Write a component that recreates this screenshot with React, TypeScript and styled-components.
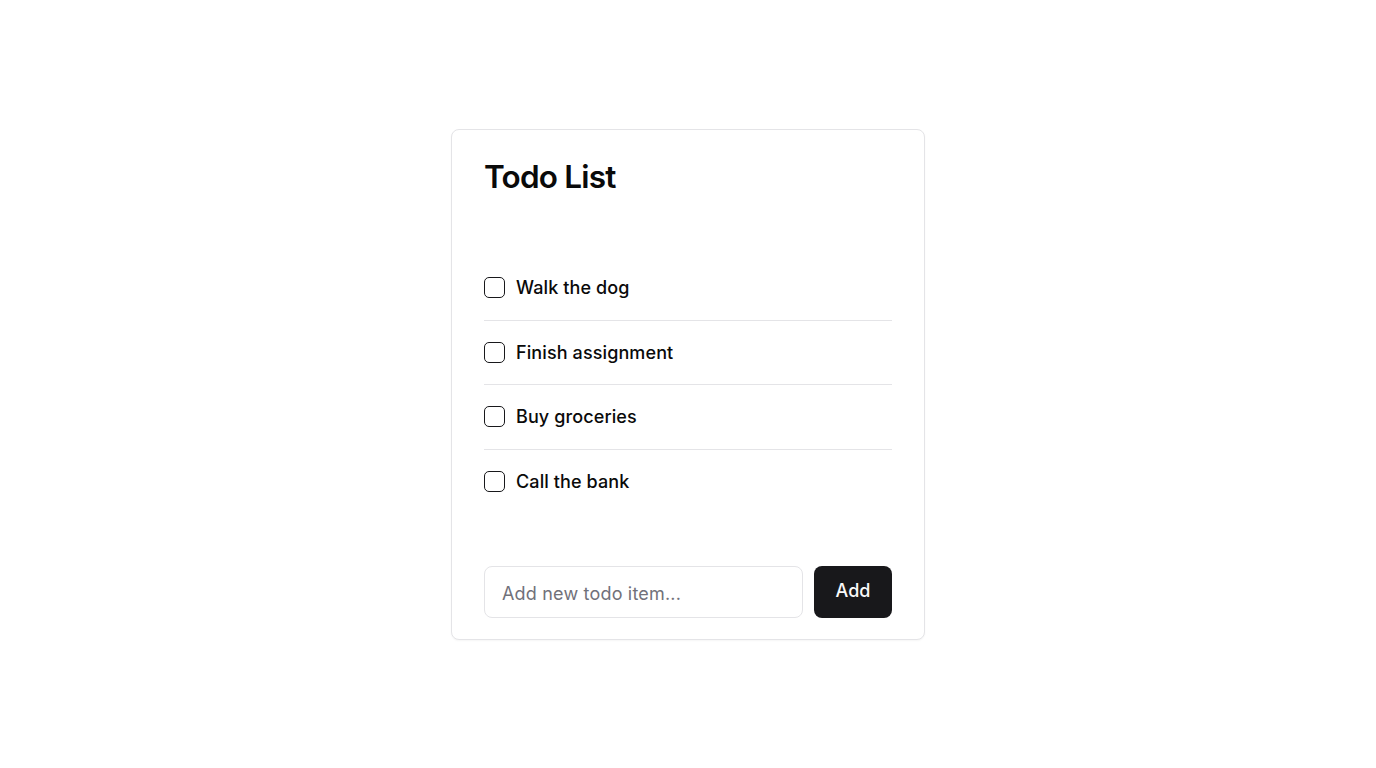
import React, { useState } from "react";
import styled, { createGlobalStyle } from "styled-components";

const Global = createGlobalStyle`
  * { box-sizing: border-box; }
  html, body { margin: 0; padding: 0; background: #ffffff; }
  body { font-family: Inter, "Noto Sans", sans-serif; color: #0a0a0a; }
`;

const Page = styled.div`
  min-height: 768px;
  display: flex;
  justify-content: center;
  padding-top: 129px;
`;

const Card = styled.div`
  width: 474px;
  height: 511px;
  border: 1px solid #e4e4e7;
  border-radius: 8px;
  background: #fff;
  box-shadow: 0 1px 2px rgba(0, 0, 0, 0.04);
  padding: 32px 32px 21px;
  display: flex;
  flex-direction: column;
`;

const Title = styled.h2`
  margin: 0;
  font-size: 31.5px;
  line-height: 30px;
  font-weight: 600;
  letter-spacing: -0.025em;
  color: #0a0a0a;
`;

const List = styled.ul`
  list-style: none;
  margin: 64px 0 0;
  padding: 0;
`;

const Row = styled.li<{ $last?: boolean }>`
  display: flex;
  align-items: center;
  gap: 11px;
  height: 64.5px;
  border-bottom: ${(p) => (p.$last ? "none" : "1px solid #e4e4e7")};
`;

const Box = styled.span`
  width: 21px;
  height: 21px;
  border: 1.5px solid #18181b;
  border-radius: 5px;
  flex: none;
`;

const Label = styled.span`
  font-size: 18px;
  font-weight: 500;
  letter-spacing: 0.006em;
  color: #0a0a0a;
`;

const Form = styled.div`
  margin-top: auto;
  display: flex;
  gap: 11px;
`;

const Input = styled.input`
  flex: 1;
  min-width: 0;
  height: 52px;
  border: 1px solid #e4e4e7;
  border-radius: 8px;
  padding: 2px 17px 0;
  font-family: Inter, sans-serif;
  font-size: 18px;
  letter-spacing: 0.01em;
  color: #0a0a0a;
  outline: none;
  &::placeholder { color: #71717a; }
`;

const Button = styled.button`
  flex: none;
  width: 78px;
  height: 52px;
  border: none;
  border-radius: 8px;
  background: #18181b;
  color: #fafafa;
  font-family: Inter, sans-serif;
  font-size: 18px;
  font-weight: 500;
  padding: 0 0 3px;
`;

const items = ["Walk the dog", "Finish assignment", "Buy groceries", "Call the bank"];

export default function App() {
  const [v, setV] = useState("");
  return (
    <>
      <Global />
      <Page>
        <Card>
          <Title>Todo List</Title>
          <List>
            {items.map((t, i) => (
              <Row key={t} $last={i === items.length - 1}>
                <Box />
                <Label>{t}</Label>
              </Row>
            ))}
          </List>
          <Form>
            <Input placeholder="Add new todo item..." value={v} onChange={(e) => setV(e.target.value)} />
            <Button>Add</Button>
          </Form>
        </Card>
      </Page>
    </>
  );
}
